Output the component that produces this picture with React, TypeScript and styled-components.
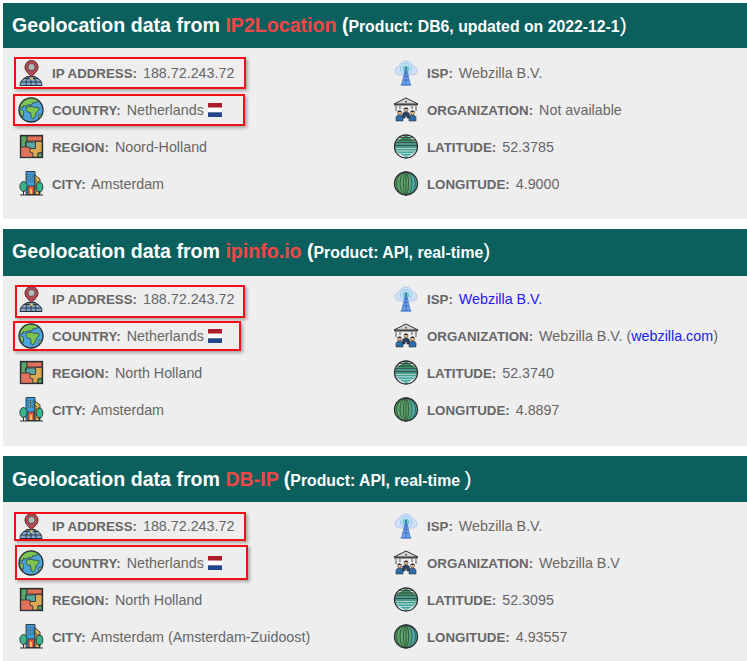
import React from "react";
import styled, { createGlobalStyle } from "styled-components";

const Global = createGlobalStyle`
  html, body { margin: 0; padding: 0; background: #fff; }
  body { font-family: "Liberation Sans", Arial, sans-serif; }
`;

const Page = styled.div`
  width: 747px;
  height: 661px;
  overflow: hidden;
  padding: 3px 0 0 3px;
  box-sizing: border-box;
  display: flex;
  flex-direction: column;
  gap: 10px;
`;

const Panel = styled.section`
  display: flex;
  flex-direction: column;
  flex: none;
`;

const Header = styled.h2<{ $h: number; $lift: number }>`
  margin: 0;
  height: ${(p) => p.$h}px;
  box-sizing: border-box;
  padding: 0 0 ${(p) => p.$lift}px 9px;
  background: #0b605e;
  color: #fff;
  display: flex;
  align-items: center;
  font-size: 19.6px;
  font-weight: 700;
  line-height: 1;
`;

const Title = styled.span`
  white-space: pre;
`;

const Source = styled.span`
  color: #f44646;
`;

const Product = styled.span`
  font-size: 15.8px;
`;

const Close = styled.span`
  font-size: 21px;
  font-weight: 400;
`;

const Body = styled.div<{ $h: number; $top: number }>`
  background: #eee;
  height: ${(p) => p.$h}px;
  box-sizing: border-box;
  padding: ${(p) => p.$top}px 0 0 15px;
  display: grid;
  grid-template-columns: 375px 1fr;
  grid-template-rows: repeat(4, 37px);
  grid-auto-flow: column;
`;

const Row = styled.div`
  position: relative;
  display: flex;
  align-items: center;
  gap: 8px;
  font-size: 14.3px;
  color: #666;
  white-space: pre;
`;

const Label = styled.b`
  font-weight: 700;
  font-size: 13.3px;
  margin-right: 2px;
`;

const Link = styled.a`
  color: #2020ee;
  text-decoration: none;
`;

const Highlight = styled.div<{ $l: number; $t: number; $w: number; $h: number }>`
  position: absolute;
  left: ${(p) => p.$l}px;
  top: ${(p) => p.$t}px;
  width: ${(p) => p.$w}px;
  height: ${(p) => p.$h}px;
  box-sizing: border-box;
  border: 2px solid #f01018;
  box-shadow: 2px 2px 3px rgba(0, 0, 0, 0.3);
  pointer-events: none;
`;

const FlagBox = styled.svg`
  width: 14px;
  height: 14px;
  vertical-align: -2px;
`;

const IconBox = styled.svg`
  width: 26px;
  height: 26px;
  flex: none;
`;

const INK = "#2a2f33";

const Flag = () => (
  <FlagBox viewBox="0 0 14 14">
    <rect width="14" height="4.7" fill="#ae1c28" />
    <rect y="4.7" width="14" height="4.6" fill="#fff" />
    <rect y="9.3" width="14" height="4.7" fill="#21468b" />
  </FlagBox>
);

const IpIcon = () => (
  <IconBox viewBox="0 0 26 26">
    <path d="M2 25.5c0-3 1.500-5.500 4-7l3-2h8l3 2c2.500 1.500 4 4 4 7z" fill="#7fa8cf" stroke={INK} strokeWidth="1" />
    <path d="M8 25.500c0-4 1-7 2.500-9M18 25.500c0-4-1-7-2.500-9M3 22h20M5.500 18.500h15M13 17v8.500" fill="none" stroke={INK} strokeWidth="0.9" />
    <path d="M13.500 17.500c-1.500-3.500-6.500-5.500-6.500-10.500a6.500 6.500 0 0 1 13 0c0 5-5 7-6.500 10.500z" fill="#b9474f" stroke="#5a2a30" strokeWidth="1" />
    <circle cx="13.500" cy="7" r="3.600" fill="#b5b5b5" stroke="#444" strokeWidth="0.8" />
    <circle cx="13.500" cy="18.500" r="1.300" fill="#f2cf45" />
  </IconBox>
);

const GlobeIcon = () => (
  <IconBox viewBox="0 0 26 26">
    <circle cx="13" cy="13" r="12" fill="#4ba3d9" stroke={INK} strokeWidth="1.300" />
    <path d="M10 1.600c3-.8 7-.3 10 2-1 2-3 2.500-5 2l-1.500 2.500-3-.5C9 9 7 9.500 5.500 8.500l-.5 2c-1.500.5-3 .3-3.500 0C3 6 6 2.800 10 1.600z" fill="#7cc451" stroke={INK} strokeWidth="0.7" />
    <path d="M8.500 10.500c2-1.500 5-1.500 7-.5 2 .5 4 0 5.500 1 .5 1.500-1 3-2.500 4l-1 3.500-2.500 3.500c-1.500 0-2-1.500-2-3.500l-.5-3c-2.500 0-4.500-1.500-4.500-3.500z" fill="#7cc451" stroke={INK} strokeWidth="0.7" />
    <path d="M1.500 13c1.500-.5 3 0 4 1.500.5 1.500-.5 2.500 0 3.500l-.5 2C3 19 1.500 16 1.500 13z" fill="#7cc451" stroke={INK} strokeWidth="0.7" />
    <path d="M21 17.500c1.200-.5 2 0 2.500.5-.5 1.500-1.500 2.500-2.500 3-.5-1-.5-2.500 0-3.500z" fill="#7cc451" stroke={INK} strokeWidth="0.6" />
  </IconBox>
);

const RegionIcon = () => (
  <IconBox viewBox="0 0 26 26">
    <rect x="2.500" y="1.500" width="22" height="22" fill="#e0735c" stroke={INK} strokeWidth="1.300" />
    <path d="M3 2h6v6H7.500v5H3z" fill="#5aa868" stroke={INK} strokeWidth="0.8" />
    <path d="M9 2h15v5H9z" fill="#de7159" stroke={INK} strokeWidth="0.8" />
    <path d="M8 8h9.500v6.500H12V13H8z" fill="#55aaa5" stroke={INK} strokeWidth="0.8" />
    <path d="M17.500 7.500H24v11l-4 .5v4h-5.500l.5-4-3-1v-3.500h5.500z" fill="#d9a955" stroke={INK} strokeWidth="0.8" />
    <path d="M20 19h4v4h-4z" fill="#5aa868" stroke={INK} strokeWidth="0.8" />
  </IconBox>
);

const CityIcon = () => (
  <IconBox viewBox="0 0 26 26">
    <path d="M8 .5h9v23H8z" fill="#3f9bd6" stroke={INK} strokeWidth="0.9" />
    <path d="M17 4l5 4v15.500h-5z" fill="#e3b654" stroke={INK} strokeWidth="0.9" />
    <path d="M18.500 9v12M20.500 10v12M10 3v8M12.500 3v8M15 3v8" stroke="#4a4a38" strokeWidth="0.9" strokeDasharray="1.200 1" />
    <path d="M10 23.500V15h6v8.500z" fill="#d9683c" stroke={INK} strokeWidth="0.8" />
    <path d="M12 23v-5h2v5z" fill="#f0c255" />
    <ellipse cx="5.500" cy="15.500" rx="3.600" ry="5" fill="#38b38e" stroke={INK} strokeWidth="0.9" />
    <ellipse cx="21.500" cy="16" rx="3.300" ry="4.800" fill="#38b38e" stroke={INK} strokeWidth="0.9" />
    <path d="M5.500 20v4M21.500 20.500V24M2 24h23" stroke={INK} strokeWidth="1" />
  </IconBox>
);

const IspIcon = () => (
  <IconBox viewBox="0 0 26 26">
    <path d="M7 15c-3.500 0-5-2-5-4.500C2 8 4 6.500 6 6.500 7 3 10 1 13 1s6 2 7 5.500c2 0 4 1.500 4 4S22.500 15 19 15z" fill="#cfe0f7" stroke="#a9c4ec" strokeWidth="0.8" />
    <circle cx="13" cy="9" r="5.500" fill="#bfe8ef" stroke="#8fc0ea" strokeWidth="0.8" />
    <circle cx="13" cy="9" r="3" fill="#7fd4d4" stroke="#78aee2" strokeWidth="0.7" />
    <path d="M13 7l-4.500 18h9z" fill="#6f9fe6" stroke="#4d7fd0" strokeWidth="0.8" />
    <path d="M11.500 13h3M10.800 16.500h4.400M10 20h6M7.500 25h11M13 7v18" stroke="#2f62b8" strokeWidth="0.7" />
    <circle cx="13" cy="8" r="1.200" fill="#2f8f9a" />
  </IconBox>
);

const Person = ({ x, y, suit }: { x: number; y: number; suit: string }) => (
  <g>
    <path d={`M${x - 3.500} ${y + 10}v-3.500c0-1.500 1.500-2.500 3.500-2.500s3.500 1 3.500 2.500v3.500z`} fill={suit} stroke={INK} strokeWidth="0.6" />
    <circle cx={x} cy={y + 1.800} r="2" fill="#e8b07c" stroke={INK} strokeWidth="0.5" />
    <path d={`M${x - 2.200} ${y + 1}c.5-1.800 4-1.800 4.400 0z`} fill="#2b2b33" />
  </g>
);

const OrgIcon = () => (
  <IconBox viewBox="0 0 26 26">
    <path d="M13 1L1 7h24z" fill="#d6d6d6" stroke={INK} strokeWidth="1" />
    <path d="M1 7h24v1.500H1z" fill="#444" />
    <path d="M3 9v5M7 9v3M19 9v3M23 9v5" stroke="#777" strokeWidth="1.300" />
    <circle cx="13" cy="4.800" r="1" fill="#555" />
    <Person x={6.500} y={14} suit="#2e6ea8" />
    <Person x={19.500} y={14} suit="#2e6ea8" />
    <Person x={13} y={11} suit="#2b3e5c" />
    <path d="M12 22l1-4 1 4z" fill="#eee" />
  </IconBox>
);

const chord = (y: number) => Math.sqrt(Math.max(0, 132.25 - (y - 12.5) * (y - 12.5)));

const bands: [number, number, string][] = [
  [1, 8.500, "#3f8f63"],
  [8.500, 16.500, "#4a9a8a"],
  [16.500, 24, "#45a7a0"],
];

const LatIcon = () => (
  <IconBox viewBox="0 0 26 26">
    {bands.map(([a, b, c]) => {
      const ca = chord(a);
      const cb = chord(b);
      const mid = chord(12.5);
      const mx = a < 12.5 && b > 12.5 ? `${13 + mid},12.5 ` : "";
      const ml = a < 12.5 && b > 12.5 ? ` ${13 - mid},12.5` : "";
      return <polygon key={a} points={`${13 - ca},${a} ${13 + ca},${a} ${mx}${13 + cb},${b} ${13 - cb},${b}${ml}`} fill={c} />;
    })}
    {[3.500, 6, 8.500, 11.500, 14.500, 17, 19.500, 22].map((y) => (
      <line key={y} x1={13 - chord(y)} x2={13 + chord(y)} y1={y} y2={y} stroke={y > 14 ? "#bfe3de" : INK} strokeWidth={y > 14 ? 0.8 : 0.7} />
    ))}
    <circle cx="13" cy="12.500" r="11.500" fill="none" stroke={INK} strokeWidth="1.300" />
  </IconBox>
);

const LonIcon = () => (
  <IconBox viewBox="0 0 26 26">
    <circle cx="13" cy="12.500" r="11.500" fill="#5aa868" />
    <path d="M15 1.200a11.500 11.500 0 0 1 0 22.600c2.500-3.500 3-7.500 3-11.300s-.5-7.800-3-11.300z" fill="#4fb3ab" />
    {[2.500, 6, 9.500].map((rx) => (
      <ellipse key={rx} cx="13" cy="12.500" rx={rx} ry="11.500" fill="none" stroke={INK} strokeWidth="0.7" />
    ))}
    <line x1="13" x2="13" y1="1" y2="24" stroke={INK} strokeWidth="0.7" />
    <circle cx="13" cy="12.500" r="11.500" fill="none" stroke={INK} strokeWidth="1.300" />
  </IconBox>
);

type Box = { l: number; t: number; w: number; h: number };
type Item = { icon: React.ReactNode; label: string; value: React.ReactNode; box?: Box };

const Field = ({ icon, label, value, box }: Item) => (
  <Row>
    {icon}
    <span>
      <Label>{label}:</Label> {value}
    </span>
    {box && <Highlight $l={box.l} $t={box.t} $w={box.w} $h={box.h} />}
  </Row>
);

const ip = "188.72.243.72";
const nl = (
  <>
    Netherlands <Flag />
  </>
);

type PanelData = {
  source: string;
  product: string;
  head: number;
  lift: number;
  body: number;
  top: number;
  items: Item[];
};

const country = (box: Box): Item => ({
  icon: <GlobeIcon />,
  label: "COUNTRY",
  value: nl,
  box,
});

const panels: PanelData[] = [
  {
    source: "IP2Location",
    product: "Product: DB6, updated on 2022-12-1",
    head: 45,
    lift: 2,
    body: 171,
    top: 6,
    items: [
      { icon: <IpIcon />, label: "IP ADDRESS", value: ip, box: { l: -4, t: 3, w: 232, h: 32 } },
      country({ l: -5, t: 3, w: 232, h: 32 }),
      { icon: <RegionIcon />, label: "REGION", value: "Noord-Holland" },
      { icon: <CityIcon />, label: "CITY", value: "Amsterdam" },
      { icon: <IspIcon />, label: "ISP", value: "Webzilla B.V." },
      { icon: <OrgIcon />, label: "ORGANIZATION", value: "Not available" },
      { icon: <LatIcon />, label: "LATITUDE", value: "52.3785" },
      { icon: <LonIcon />, label: "LONGITUDE", value: "4.9000" },
    ],
  },
  {
    source: "ipinfo.io",
    product: "Product: API, real-time",
    head: 47,
    lift: 4,
    body: 170,
    top: 4,
    items: [
      { icon: <IpIcon />, label: "IP ADDRESS", value: ip, box: { l: -3, t: 5, w: 230, h: 33 } },
      country({ l: -5, t: 4, w: 228, h: 30 }),
      { icon: <RegionIcon />, label: "REGION", value: "North Holland" },
      { icon: <CityIcon />, label: "CITY", value: "Amsterdam" },
      { icon: <IspIcon />, label: "ISP", value: <Link>Webzilla B.V.</Link> },
      {
        icon: <OrgIcon />,
        label: "ORGANIZATION",
        value: (
          <>
            Webzilla B.V. (<Link>webzilla.com</Link>)
          </>
        ),
      },
      { icon: <LatIcon />, label: "LATITUDE", value: "52.3740" },
      { icon: <LonIcon />, label: "LONGITUDE", value: "4.8897" },
    ],
  },
  {
    source: "DB-IP",
    product: "Product: API, real-time ",
    head: 46,
    lift: 0,
    body: 160,
    top: 5,
    items: [
      { icon: <IpIcon />, label: "IP ADDRESS", value: ip, box: { l: -4, t: 5, w: 232, h: 29 } },
      country({ l: -3, t: 1, w: 233, h: 35 }),
      { icon: <RegionIcon />, label: "REGION", value: "North Holland" },
      { icon: <CityIcon />, label: "CITY", value: "Amsterdam (Amsterdam-Zuidoost)" },
      { icon: <IspIcon />, label: "ISP", value: "Webzilla B.V." },
      { icon: <OrgIcon />, label: "ORGANIZATION", value: "Webzilla B.V" },
      { icon: <LatIcon />, label: "LATITUDE", value: "52.3095" },
      { icon: <LonIcon />, label: "LONGITUDE", value: "4.93557" },
    ],
  },
];

export default function App() {
  return (
    <Page>
      <Global />
      {panels.map((p) => (
        <Panel key={p.source}>
          <Header $h={p.head} $lift={p.lift}>
            <Title>
              Geolocation data from <Source>{p.source}</Source> (<Product>{p.product}</Product>
              <Close>)</Close>
            </Title>
          </Header>
          <Body $h={p.body} $top={p.top}>
            {p.items.map((it) => (
              <Field key={it.label} {...it} />
            ))}
          </Body>
        </Panel>
      ))}
    </Page>
  );
}
